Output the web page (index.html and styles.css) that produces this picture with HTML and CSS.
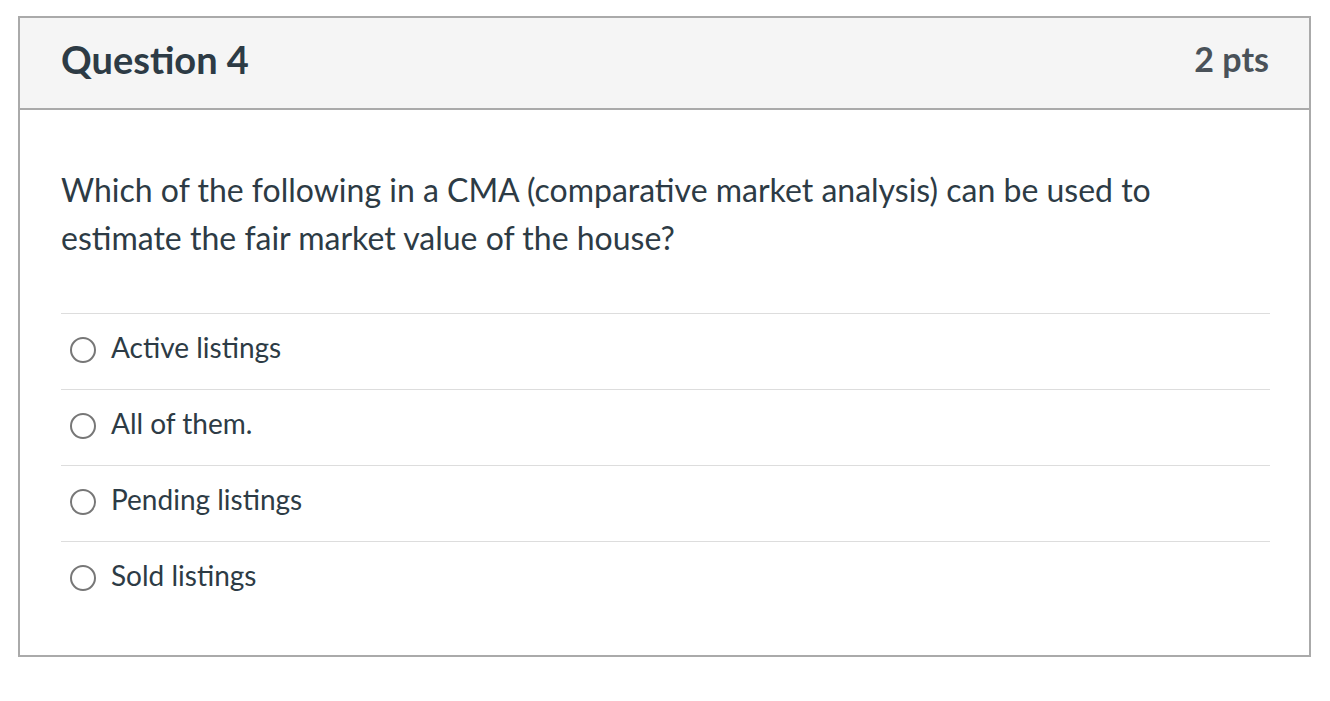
FILE: index.html
```html
<!DOCTYPE html>
<html>
<head>
<meta charset="utf-8">
<link rel="stylesheet" href="styles.css">
</head>
<body>
<div class="card">
  <div class="card-header">
    <h2 class="title">Question 4</h2>
    <div class="pts">2 pts</div>
  </div>
  <div class="card-body">
    <p class="question">Which of the following in a CMA (comparative market analysis) can be used to estimate the fair market value of the house?</p>
    <div class="answers">
      <label class="answer"><span class="radio"></span><span class="answer-text">Active listings</span></label>
      <label class="answer"><span class="radio"></span><span class="answer-text">All of them.</span></label>
      <label class="answer"><span class="radio"></span><span class="answer-text">Pending listings</span></label>
      <label class="answer"><span class="radio"></span><span class="answer-text">Sold listings</span></label>
    </div>
  </div>
</div>
</body>
</html>
```
FILE: styles.css
```css
html, body {
  margin: 0;
  padding: 0;
  background: #fff;
}
body {
  font-family: Lato, "Open Sans", sans-serif;
  color: #2d3b45;
  padding: 16px 19px 0 18px;
}
.card {
  border: 2px solid #aaaaaa;
  box-sizing: border-box;
  width: 1293px;
  height: 641px;
}
.card-header {
  background: #f5f5f5;
  border-bottom: 2px solid #aaaaaa;
  height: 92px;
  box-sizing: border-box;
  display: flex;
  align-items: center;
  justify-content: space-between;
  padding: 0 40px 9px 41px;
}
.title {
  margin: 0;
  font-size: 38px;
  font-weight: 700;
  color: #2d3b45;
}
.pts {
  font-size: 34px;
  font-weight: 700;
  color: #4a5259;
}
.card-body {
  padding: 56px 39px 0 41px;
}
.question {
  margin: 0;
  font-size: 32px;
  line-height: 48px;
  padding-right: 60px;
}
.answers {
  margin-top: 51px;
}
.answer {
  display: flex;
  align-items: center;
  height: 75px;
  box-sizing: content-box;
  border-top: 1px solid #dddddd;
}
.radio {
  width: 26px;
  height: 26px;
  border: 2px solid #777777;
  border-radius: 50%;
  box-sizing: border-box;
  margin-left: 9px;
  margin-right: 15px;
  margin-bottom: 4px;
  flex: none;
}
.answer-text {
  font-size: 28px;
  color: #2d3b45;
  margin-bottom: 10px;
}
```
